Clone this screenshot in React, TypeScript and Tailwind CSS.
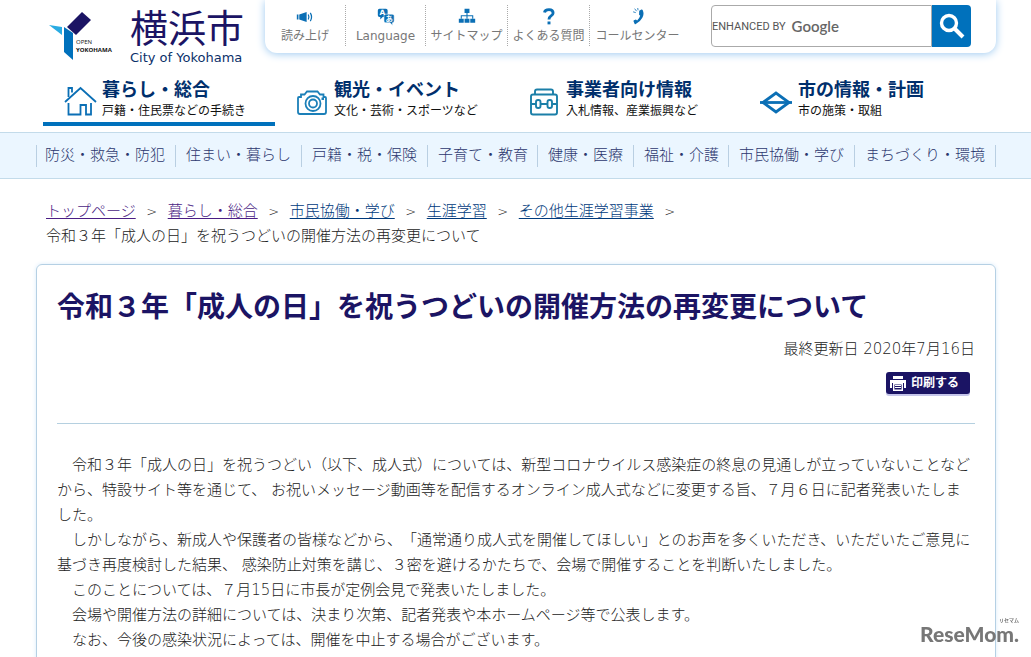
import React from "react";

const UTILITIES = [
  { label: "読み上げ", icon: <SpeakerIcon />, width: "w-20" },
  { label: "Language", icon: <LanguageIcon />, width: "w-20" },
  { label: "サイトマップ", icon: <SitemapIcon />, width: "w-[82px]" },
  { label: "よくある質問", icon: <QuestionIcon />, width: "w-[82px]" },
  { label: "コールセンター", icon: <PhoneIcon />, width: "w-24" },
];

const SECTIONS = [
  { title: "暮らし・総合", sub: "戸籍・住民票などの手続き", icon: <HouseIcon />, active: true },
  { title: "観光・イベント", sub: "文化・芸術・スポーツなど", icon: <CameraIcon /> },
  { title: "事業者向け情報", sub: "入札情報、産業振興など", icon: <BriefcaseIcon /> },
  { title: "市の情報・計画", sub: "市の施策・取組", icon: <CityMarkIcon /> },
];

const CATEGORIES = [
  "防災・救急・防犯",
  "住まい・暮らし",
  "戸籍・税・保険",
  "子育て・教育",
  "健康・医療",
  "福祉・介護",
  "市民協働・学び",
  "まちづくり・環境",
];

const CRUMBS = [
  { label: "トップページ", visited: true },
  { label: "暮らし・総合", visited: true },
  { label: "市民協働・学び" },
  { label: "生涯学習" },
  { label: "その他生涯学習事業" },
];

const PARAGRAPHS = [
  "　令和３年「成人の日」を祝うつどい（以下、成人式）については、新型コロナウイルス感染症の終息の見通しが立っていないことなどから、特設サイト等を通じて、 お祝いメッセージ動画等を配信するオンライン成人式などに変更する旨、７月６日に記者発表いたしました。",
  "　しかしながら、新成人や保護者の皆様などから、「通常通り成人式を開催してほしい」とのお声を多くいただき、いただいたご意見に基づき再度検討した結果、 感染防止対策を講じ、３密を避けるかたちで、会場で開催することを判断いたしました。",
  "　このことについては、７月15日に市長が定例会見で発表いたしました。",
  "　会場や開催方法の詳細については、決まり次第、記者発表や本ホームページ等で公表します。",
  "　なお、今後の感染状況によっては、開催を中止する場合がございます。",
];

export default function App() {
  return (
    <div
      lang="ja"
      className="h-screen overflow-hidden bg-white font-['DejaVu_Sans','Noto_Sans_CJK_JP',sans-serif] text-[15px] leading-[25px] font-light text-[#222] [text-spacing-trim:space-all]"
    >
      <Header />
      <CategoryBar />
      <main className="mx-auto max-w-[1032px] pr-[35px] pl-9">
        <Breadcrumbs />
        <Article />
      </main>
      <Watermark />
    </div>
  );
}

// ── Header ────────────────────────────────────────────────────────────────────

function Header() {
  return (
    <header className="mx-auto max-w-[1032px] pr-[35px] pl-9">
      <div className="flex items-start justify-between">
        <a href="#" className="flex h-[73px] items-start gap-3.5 pt-2 pl-3">
          <OpenYokohama />
          <span className="flex flex-col font-normal text-[#1b1464]">
            <span className="text-[38px] leading-[42px]">横浜市</span>
            <span className="text-[13px] leading-4 text-[#0b3069]">City of Yokohama</span>
          </span>
        </a>
        <div className="flex h-[53px] w-[731px] items-start rounded-b-xl bg-white pt-[5px] shadow-[0_1px_9px_#9cc9f0]">
          <ul className="flex">
            {UTILITIES.map((u, i) => (
              <li
                key={u.label}
                className={`${u.width} ${i > 0 ? "border-l border-dotted border-[#aaa]" : ""}`}
              >
                <a
                  href="#"
                  className="flex h-[41px] flex-col items-center pt-[3px] text-xs font-normal whitespace-nowrap text-[#777]"
                >
                  {u.icon}
                  <span className="leading-5">{u.label}</span>
                </a>
              </li>
            ))}
          </ul>
          <form
            className="mr-[25px] ml-auto flex w-[260px] font-normal"
            onSubmit={(e) => e.preventDefault()}
          >
            <label className="relative block h-[42px] min-w-0 flex-1 rounded-l border border-[#aaa]">
              <input type="search" aria-label="サイト内検索" className="h-full w-full outline-none" />
              <span className="pointer-events-none absolute inset-y-0 left-0 flex items-center gap-1.5 font-['Roboto',sans-serif] text-[11px] text-[#555]">
                ENHANCED BY
                <span className="font-['Lato',sans-serif] text-[15px] font-semibold text-[#666]">Google</span>
              </span>
            </label>
            <button
              type="submit"
              aria-label="検索"
              className="flex h-[42px] w-[39px] items-center justify-center rounded-r bg-[#0071bc]"
            >
              <SearchIcon />
            </button>
          </form>
        </div>
      </div>
      <nav className="flex pl-[7px]">
        {SECTIONS.map((s) => (
          <a
            key={s.title}
            href="#"
            className={`flex h-[53px] w-[232px] gap-[5px] border-b-4 pl-[21px] ${
              s.active ? "border-[#0071bc]" : "border-transparent"
            }`}
          >
            <span className="pt-3">{s.icon}</span>
            <span className="flex flex-col pt-1.5">
              <span className="text-lg leading-[22px] font-bold text-[#002f6c]">{s.title}</span>
              <span className="text-xs leading-5 font-normal text-[#111]">{s.sub}</span>
            </span>
          </a>
        ))}
      </nav>
    </header>
  );
}

function CategoryBar() {
  return (
    <nav className="mt-1.5 border-y border-[#c3dbea] bg-[#ebf6ff]">
      <ul className="mx-auto flex h-[45px] max-w-[1032px] items-center pr-[35px] pl-9">
        {CATEGORIES.map((c, i) => (
          <li
            key={c}
            className={`h-[22px] border-r border-[#b9cfe2] leading-[21px] whitespace-nowrap ${
              i === 0 ? "border-l pr-2.5 pl-2" : i === 3 || i === 5 ? "pr-[9px] pl-2.5" : "px-2.5"
            }`}
          >
            <a href="#" className="text-[#2c366e]">
              {c}
            </a>
          </li>
        ))}
      </ul>
    </nav>
  );
}

function Breadcrumbs() {
  return (
    <nav aria-label="パンくずリスト" className="px-2.5 pt-5 pb-[15px]">
      <ol className="flex flex-wrap">
        {CRUMBS.map((c) => (
          <li key={c.label} className="flex">
            <a
              href="#"
              className={`underline underline-offset-2 ${c.visited ? "text-[#4a1d84]" : "text-[#003a7c]"}`}
            >
              {c.label}
            </a>
            <span className="w-8 text-center text-[13px]">&gt;</span>
          </li>
        ))}
        <li className="w-full">令和３年「成人の日」を祝うつどいの開催方法の再変更について</li>
      </ol>
    </nav>
  );
}

// ── Article ───────────────────────────────────────────────────────────────────

function Article() {
  return (
    <article className="rounded-md border border-[#b5d0e4] px-5 pt-[22px] pb-10 shadow-[0_0_4px_#d9ebfa]">
      <h1 className="text-[28px] leading-[42px] font-bold text-[#1b1464]">
        令和３年「成人の日」を祝うつどいの開催方法の再変更について
      </h1>
      <div className="flex flex-col items-end border-b border-[#b5d0e0] pt-2 pb-[29px]">
        <p>最終更新日 2020年7月16日</p>
        <button
          type="button"
          className="mt-2.5 mr-[5px] flex h-[22px] w-[84px] items-center gap-[5px] rounded-[3px] bg-[#1b1464] pl-1 text-xs font-bold text-white shadow-[0_2px_0_#c5c5ea]"
        >
          <PrinterIcon />
          印刷する
        </button>
      </div>
      <div className="pt-[29px]">
        {PARAGRAPHS.map((p) => (
          <p key={p}>{p}</p>
        ))}
      </div>
    </article>
  );
}

function Watermark() {
  return (
    <div className="fixed right-3 bottom-3 flex flex-col items-end text-[#777]">
      <span className="text-[5px] leading-[5px] font-bold">リセマム</span>
      <span className="font-['Lato',sans-serif] text-[21px] leading-[22px] font-black">ReseMom.</span>
    </div>
  );
}

// ── Icons ─────────────────────────────────────────────────────────────────────

function OpenYokohama() {
  return (
    <svg width="68" height="54" viewBox="0 0 68 54" role="img" aria-label="OPEN YOKOHAMA">
      <path d="M1 17l13 2 0 8z" fill="#29abe2" />
      <path d="M16 19l9 6v27l-9-8z" fill="#0071bc" />
      <path d="M34 4l9 8-15 15-9-8z" fill="#1b1464" />
      <g fontFamily="Open Sans, sans-serif" fontSize="6" fill="#111">
        <text x="28" y="36" fontWeight="normal">
          OPEN
        </text>
        <text x="28" y="44" fontWeight="bold">
          YOKOHAMA
        </text>
      </g>
    </svg>
  );
}

function SpeakerIcon() {
  return (
    <svg width="22" height="22" viewBox="0 0 22 22" fill="#0b6fb5">
      <path d="M1 8h2v6H1zM4 8l9-3v12l-9-3z" />
      <path
        d="M15 8q1.500 3 0 6M17.500 6q3 5 0 10"
        fill="none"
        stroke="#0b6fb5"
        strokeWidth="1.500"
      />
    </svg>
  );
}

function LanguageIcon() {
  return (
    <svg width="22" height="22" viewBox="0 0 22 22" fill="#0b6fb5">
      <path d="M3 1h8q2 0 2 2v6q0 2-2 2H7l-3 3v-3H3q-2 0-2-2V3q0-2 2-2z" />
      <path
        d="M10.500 7.500h8q2.500 0 2.500 2v6.500q0 2-2 2v3.500L16 18h-5.500q-2 0-2-2V9.500q0-2 2-2z"
        stroke="#fff"
        strokeWidth=".7"
      />
      <text x="3" y="9" fontSize="9" fontWeight="bold" fill="#fff">
        A
      </text>
      <text x="10.500" y="16" fontSize="9" fontWeight="bold" fill="#fff">
        あ
      </text>
    </svg>
  );
}

function SitemapIcon() {
  return (
    <svg width="22" height="22" viewBox="0 0 22 22" fill="#0b6fb5">
      <path d="M8 1h6v5H8zM1 13h6v5H1zM8 13h6v5H8zM15 13h6v5h-6z" />
      <path d="M11 6v7M4 13V9.500h14V13" fill="none" stroke="#0b6fb5" strokeWidth="1.300" />
    </svg>
  );
}

function QuestionIcon() {
  return (
    <svg width="22" height="22" viewBox="0 0 22 22" fill="none" stroke="#0b6fb5">
      <path d="M5.500 5.500Q6 2 11 2t5 4q0 2-2.500 3.700T11 14" strokeWidth="3.500" />
      <path d="M9.200 16.500h3.600V20H9.200z" fill="#0b6fb5" stroke="none" />
    </svg>
  );
}

function PhoneIcon() {
  return (
    <svg width="22" height="22" viewBox="0 0 22 22" fill="#0b6fb5">
      <path d="M12.500 3.300l2.700-1.500q1-.4 1.500.6 2.300 4.600-.4 9.600-2.800 5.300-8 7.600-1 .4-1.500-.5l-1.300-2.800q-.3-1 .6-1.400l2.300-.7 1.600 1q2.600-2 3.700-5.600l-1.400-1.200z" />
      <path
        d="M5.500 4.800l2.300.7M7.200 1.200l1.800 2.300M10.700.3l.3 2"
        fill="none"
        stroke="#0b6fb5"
        strokeLinecap="round"
        strokeWidth="1"
      />
    </svg>
  );
}

function SearchIcon() {
  return (
    <svg width="28" height="28" viewBox="0 0 28 28" fill="none" stroke="#fff">
      <circle cx="11" cy="11" r="7.500" strokeWidth="3.400" />
      <path d="M16.500 16.500l8.500 8.500" strokeWidth="4" />
    </svg>
  );
}

function HouseIcon() {
  return (
    <svg width="33" height="34" viewBox="0 0 33 34" fill="none" stroke="#0b6fb5" strokeWidth="1.800">
      <path d="M1 17L16.500 3 32 17" />
      <path d="M4.500 12V3H8v4.500" />
      <path d="M4.500 18v11.500h12V20H22v9.500h5V18" />
    </svg>
  );
}

function CameraIcon() {
  return (
    <svg width="33" height="34" viewBox="0 0 33 34" fill="none" stroke="#1b7fb8" strokeWidth="1.800">
      <path d="M5 9.500h3.500l2.500-3h10.500l2.500 3h3.500v2.500h1.500q1 0 1 1v14q0 2-2 2H4q-2 0-2-2V13q0-1 1-1h2z" />
      <circle cx="17" cy="18.500" r="7.500" />
      <circle cx="17" cy="18.500" r="4" />
      <path d="M25.500 12.500h2.500v2.500h-2.500z" fill="#1b7fb8" stroke="none" />
    </svg>
  );
}

function BriefcaseIcon() {
  return (
    <svg width="33" height="34" viewBox="0 0 33 34" fill="none" stroke="#1b7fa8" strokeWidth="1.900">
      <path d="M7 9V6.500Q7 4.500 9 4.500h14q2 0 2 2V9M5 9.500h22q2 0 2 2v16q0 2-2 2H5q-2 0-2-2v-16q0-2 2-2z" />
      <path d="M3 19h5M12.500 19h7M24.500 19H29" />
      <rect x="8" y="15" width="4.500" height="8" rx="2" />
      <rect x="19.500" y="15" width="4.500" height="8" rx="2" />
    </svg>
  );
}

function CityMarkIcon() {
  return (
    <svg width="33" height="34" viewBox="0 0 33 34" fill="none" stroke="#0b6fb5" strokeWidth="2.800">
      <path d="M3 17.500L16 8l13 9.500L16 27z" />
      <path d="M0 17.500h32" />
    </svg>
  );
}

function PrinterIcon() {
  return (
    <svg width="16" height="15" viewBox="0 0 16 15" fill="#fff">
      <path d="M3 0h10v3H3zM0 4h16v8h-2V7H2v5H0z" />
      <path d="M3.700 7.700h8.600v6.600H3.700z" fill="none" stroke="#fff" strokeWidth="1.400" />
      <path d="M5 9h6v1H5zM5 11h6v1H5z" />
    </svg>
  );
}
